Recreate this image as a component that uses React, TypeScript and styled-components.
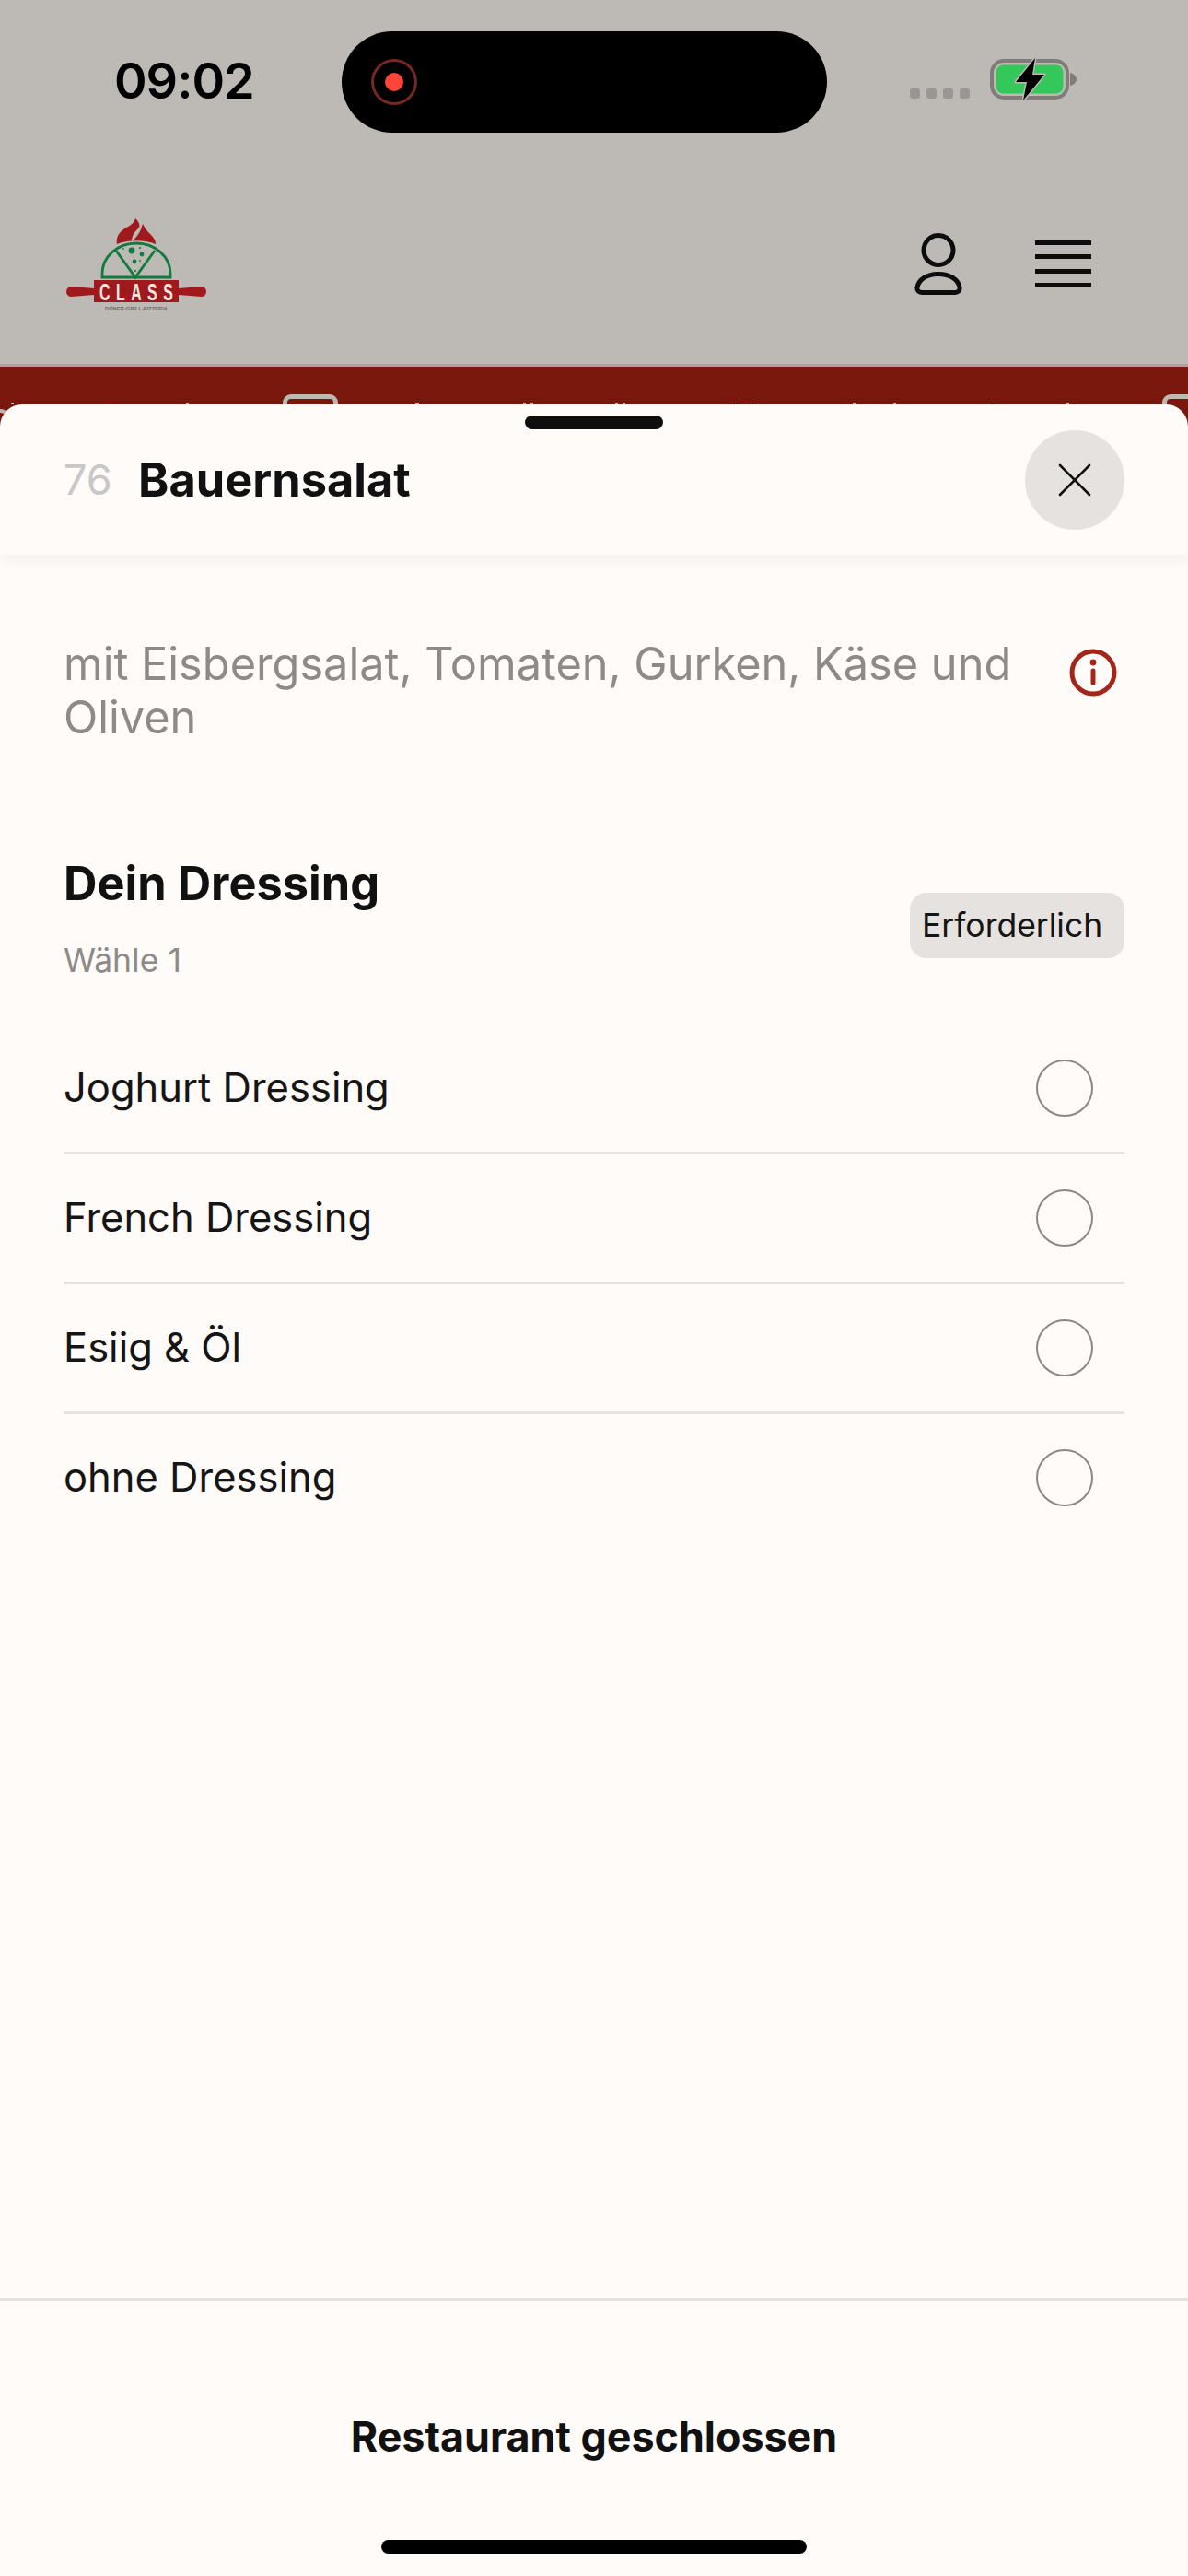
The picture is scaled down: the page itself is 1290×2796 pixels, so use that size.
import React from 'react'
import styled, { createGlobalStyle } from 'styled-components'

const GlobalStyle = createGlobalStyle`
  html, body {
    margin: 0;
    padding: 0;
    background: #fffbf8;
  }
  * {
    box-sizing: border-box;
  }
`

const Page = styled.div`
  width: 1290px;
  height: 2796px;
  overflow: hidden;
  display: flex;
  flex-direction: column;
  font-family: Inter, "Liberation Sans", sans-serif;
  color: #111;
`

const Backdrop = styled.header`
  background: #bdb9b5;
  border-bottom: 3px solid #a9a5a1;
`

const StatusBar = styled.div`
  height: 178px;
  padding: 34px 0 0 124px;
  display: flex;
  align-items: flex-start;
`

const Time = styled.div`
  width: 149px;
  height: 110px;
  font-size: 54px;
  font-weight: 600;
  letter-spacing: -1px;
  line-height: 108px;
  color: #000;
  white-space: nowrap;
`

const Island = styled.div`
  width: 527px;
  height: 110px;
  margin-left: 98px;
  padding-left: 32px;
  border-radius: 55px;
  background: #000;
  display: flex;
  align-items: center;
`

const RecordDot = styled.div`
  width: 50px;
  height: 50px;
  border-radius: 50%;
  border: 3px solid #742a22;
  display: flex;
  align-items: center;
  justify-content: center;

  &::after {
    content: '';
    width: 20px;
    height: 20px;
    border-radius: 50%;
    background: #ff453a;
  }
`

const SignalDots = styled.div`
  margin: 62px 0 0 90px;
  display: flex;
  gap: 7px;
`

const SignalDot = styled.span`
  width: 11px;
  height: 11px;
  border-radius: 3px;
  background: #9a9693;
`

const BatteryIcon = styled.svg`
  display: block;
  margin: 28px 0 0 22px;
`

const NavBar = styled.nav`
  height: 217px;
  padding: 0 105px 0 72px;
  display: flex;
  align-items: center;
`

const Logo = styled.svg`
  display: block;
`

const NavIcons = styled.div`
  margin-left: auto;
  display: flex;
  align-items: center;
  gap: 79px;
`

const BurgerIcon = styled.div`
  width: 61px;
  height: 51px;
  display: flex;
  flex-direction: column;
  justify-content: space-between;

  span {
    height: 5px;
    background: #0c0c0c;
  }
`

const Banner = styled.div`
  position: relative;
  height: 80px;
  background: #7a180d;
  padding: 30px 0 0 307px;
  display: flex;
  gap: 895px;
`

const BannerBox = styled.div`
  flex: 0 0 60px;
  height: 60px;
  border: 5px solid #bdb9b5;
  border-radius: 9px;
`

const BannerTips = styled.svg`
  position: absolute;
  left: 0;
  top: 38px;
`

const Sheet = styled.section`
  position: relative;
  flex: 1;
  margin-top: -39px;
  background: #fffbf8;
  border-radius: 24px 24px 0 0;
  display: flex;
  flex-direction: column;
`

const Handle = styled.div`
  position: absolute;
  top: 12px;
  left: 570px;
  width: 150px;
  height: 15px;
  border-radius: 8px;
  background: #0e0e0e;
`

const SheetHeader = styled.div`
  flex: 0 0 163px;
  padding: 0 69px;
  display: flex;
  align-items: center;
  border-radius: 24px 24px 0 0;
  box-shadow: 0 4px 16px rgba(60, 40, 30, 0.07);
`

const ItemNumber = styled.span`
  width: 81px;
  font-size: 45px;
  color: #c9c7c5;
`

const ItemTitle = styled.h1`
  margin: 0;
  font-size: 50.5px;
  font-weight: 700;
  color: #111;
`

const CloseButton = styled.button`
  margin-left: auto;
  width: 108px;
  height: 108px;
  padding: 0;
  border: none;
  border-radius: 50%;
  background: #e5e2df;
  display: flex;
  align-items: center;
  justify-content: center;
`

const SheetBody = styled.div`
  padding: 90px 69px 0;
`

const DescriptionRow = styled.div`
  display: flex;
  justify-content: space-between;
  align-items: flex-start;
  padding-right: 8px;
`

const Description = styled.p`
  margin: 0;
  width: 1060px;
  font-size: 48.7px;
  line-height: 58px;
  color: #8e8a87;
`

const InfoIcon = styled.svg`
  display: block;
  flex-shrink: 0;
  margin-top: 12px;
`

const GroupHeader = styled.div`
  margin-top: 121px;
  display: flex;
  justify-content: space-between;
  align-items: flex-start;
`

const GroupTitle = styled.h2`
  margin: 0;
  font-size: 50.5px;
  line-height: 60px;
  font-weight: 700;
  color: #111;
`

const GroupHint = styled.div`
  margin-top: 33px;
  font-size: 35.5px;
  line-height: 42px;
  color: #8e8a87;
`

const RequiredBadge = styled.div`
  margin-top: 40px;
  width: 233px;
  height: 71px;
  padding-left: 13px;
  border-radius: 18px;
  background: #e5e2df;
  font-size: 35.5px;
  line-height: 71px;
  color: #151515;
`

const OptionList = styled.div`
  margin-top: 48px;
`

const OptionRow = styled.div`
  height: 141px;
  padding: 0 34px 3px 0;
  display: flex;
  align-items: center;
  justify-content: space-between;
  border-bottom: 3px solid #e6e2de;
  font-size: 43.5px;
  color: #151515;

  &:last-child {
    border-bottom-color: transparent;
  }
`

const Radio = styled.span`
  width: 62px;
  height: 62px;
  margin-top: 2px;
  border-radius: 50%;
  border: 2px solid #8b8784;
`

const Footer = styled.footer`
  margin-top: auto;
  padding-top: 118px;
  border-top: 3px solid #e6e2de;
  display: flex;
  flex-direction: column;
  align-items: center;
`

const ClosedLabel = styled.div`
  font-size: 44.8px;
  line-height: 60px;
  font-weight: 700;
  color: #111;
`

const HomeBar = styled.div`
  width: 462px;
  height: 15px;
  margin: 82px 0 24px;
  border-radius: 8px;
  background: #000;
`

const options = ['Joghurt Dressing', 'French Dressing', 'Esiig & Öl', 'ohne Dressing']

const App: React.FC = () => {
  return (
    <Page>
      <GlobalStyle />
      <Backdrop>
        <StatusBar>
          <Time>09:02</Time>
          <Island>
            <RecordDot />
          </Island>
          <SignalDots>
            <SignalDot />
            <SignalDot />
            <SignalDot />
            <SignalDot />
          </SignalDots>
          <BatteryIcon width="96" height="48" viewBox="0 0 96 48">
            <rect x="2" y="4" width="82" height="40" rx="13" fill="none" stroke="#7f7c79" strokeWidth="4" />
            <rect x="6.5" y="8.5" width="73" height="31" rx="8" fill="#34c759" />
            <path d="M87 17c4 1 7 4 7 7s-3 6-7 7z" fill="#7f7c79" />
            <path d="M49 1 28 27h12l-4 20 23-28H46z" fill="#000" stroke="#bdb9b5" strokeWidth="3" strokeLinejoin="round" paintOrder="stroke" />
          </BatteryIcon>
        </StatusBar>
        <NavBar>
          <Logo width="152" height="100" viewBox="0 0 152 100">
            <path d="M55 28C53 18 61 12 67 9 71 7 74 4 75 0 79 4 81 8 78 11 74 15 71 19 71 25 75 22 79 17 81 12L83 6C86 12 88 14 92 18 96 22 97 25 97 28 85 23 67 23 55 28Z" fill="#a0191c" />
            <path d="M39 64V60a37 33 0 0 1 74 0v4z" fill="none" stroke="#13793f" strokeWidth="2.8" />
            <path d="M54 35 75 64 96 35" fill="none" stroke="#13793f" strokeWidth="2.8" />
            <g fill="#13793f">
              <circle cx="71" cy="35" r="3.4" />
              <circle cx="82" cy="39" r="2.4" />
              <circle cx="74" cy="47" r="2.4" />
              <circle cx="62" cy="33" r="0.9" />
              <circle cx="80" cy="32" r="1.1" />
              <circle cx="75" cy="57" r="1.1" />
              <circle cx="80" cy="46" r="0.9" />
            </g>
            <path d="M5.500 74 30 76V83L5.500 85a5.500 5.500 0 0 1 0-11zM146.500 74 122 76V83L146.500 85a5.500 5.500 0 0 0 0-11z" fill="#a0191c" />
            <rect x="30" y="67" width="92" height="24" fill="#a0191c" />
            <text transform="translate(36 88.500) scale(0.6 1)" letterSpacing="10.8" fontFamily="Liberation Sans, sans-serif" fontWeight="700" fontSize="26.500" fill="#f2e9e2">CLASS</text>
            <text x="42" y="99.500" textLength="68" lengthAdjust="spacingAndGlyphs" fontFamily="Liberation Sans, sans-serif" fontWeight="700" fontSize="5.500" fill="#6e6a66">DÖNER-GRILL-PIZZERIA</text>
          </Logo>
          <NavIcons>
            <svg width="52" height="67" viewBox="0 0 52 67" fill="none" stroke="#0c0c0c" strokeWidth="5">
              <circle cx="26" cy="18.5" r="16" />
              <path d="M8 64.500h36c3.500 0 5.500-2.500 5-5.500-1.500-9-11-14.500-23-14.500S4.500 50 3 59c-.5 3 1.500 5.500 5 5.500z" />
            </svg>
            <BurgerIcon>
              <span />
              <span />
              <span />
              <span />
            </BurgerIcon>
          </NavIcons>
        </NavBar>
      </Backdrop>
      <Banner>
        <BannerBox />
        <BannerBox />
        <BannerTips width="1290" height="24" viewBox="0 0 1290 24" fill="#bdb9b5">
          <path d="M0 10Q5 10 8 14" fill="none" stroke="#bdb9b5" strokeWidth="4" />
          <rect x="12" y="1" width="3" height="2" />
          <rect x="114" y="2" width="4" height="1" />
          <rect x="202" y="1" width="3" height="2" />
          <rect x="451" y="1" width="4" height="2" />
          <rect x="568" y="1" width="3" height="2" />
          <rect x="576" y="1" width="3" height="2" />
          <rect x="658" y="2" width="3" height="1" />
          <rect x="668" y="1" width="3" height="2" />
          <rect x="676" y="1" width="3" height="2" />
          <rect x="798" y="2" width="6" height="1" />
          <rect x="814" y="2" width="6" height="1" />
          <rect x="926" y="1" width="3" height="2" />
          <rect x="970" y="1" width="3" height="2" />
          <rect x="1072" y="2" width="3" height="1" />
          <rect x="1158" y="1" width="3" height="2" />
        </BannerTips>
      </Banner>
      <Sheet>
        <Handle />
        <SheetHeader>
          <ItemNumber>76</ItemNumber>
          <ItemTitle>Bauernsalat</ItemTitle>
          <CloseButton>
            <svg width="36" height="36" viewBox="0 0 36 36" stroke="#111" strokeWidth="2.6" strokeLinecap="round">
              <line x1="2" y1="2" x2="34" y2="34" />
              <line x1="34" y1="2" x2="2" y2="34" />
            </svg>
          </CloseButton>
        </SheetHeader>
        <SheetBody>
          <DescriptionRow>
            <Description>mit Eisbergsalat, Tomaten, Gurken, Käse und Oliven</Description>
            <InfoIcon width="52" height="52" viewBox="0 0 52 52" fill="none">
              <circle cx="26" cy="26" r="23" stroke="#a3261a" strokeWidth="5" />
              <circle cx="26" cy="15" r="3.400" fill="#a3261a" />
              <line x1="26" y1="24" x2="26" y2="37" stroke="#a3261a" strokeWidth="5" strokeLinecap="round" />
            </InfoIcon>
          </DescriptionRow>
          <GroupHeader>
            <div>
              <GroupTitle>Dein Dressing</GroupTitle>
              <GroupHint>Wähle 1</GroupHint>
            </div>
            <RequiredBadge>Erforderlich</RequiredBadge>
          </GroupHeader>
          <OptionList>
            {options.map((option) => (
              <OptionRow key={option}>
                {option}
                <Radio />
              </OptionRow>
            ))}
          </OptionList>
        </SheetBody>
        <Footer>
          <ClosedLabel>Restaurant geschlossen</ClosedLabel>
          <HomeBar />
        </Footer>
      </Sheet>
    </Page>
  )
}

export default App
